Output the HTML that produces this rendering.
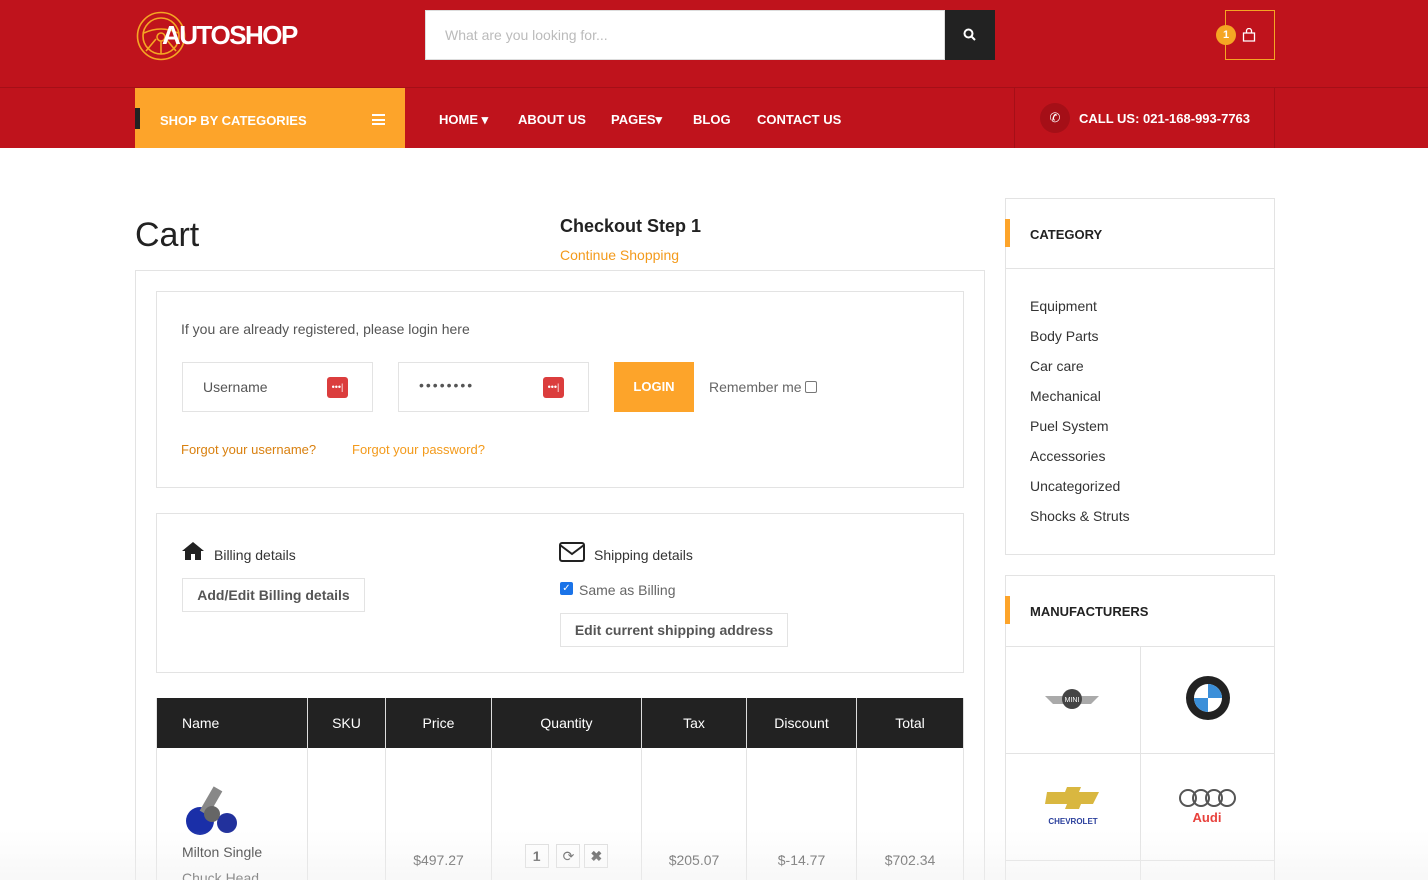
<!DOCTYPE html>
<html><head><meta charset="utf-8"><style>
*{box-sizing:border-box;margin:0;padding:0}
html,body{width:1428px;height:880px;overflow:hidden}
body{background:#fff;font-family:"Liberation Sans",sans-serif;color:#333;position:relative}
.a{position:absolute}
.hdr{left:0;top:0;width:1428px;height:148px;background:#bf131c}
.navline{left:0;top:87px;width:1428px;height:1px;background:#a50f17}
.nav{color:#fff;font-weight:bold;font-size:13px;top:112px}
.box{border:1px solid #e3e3e3;background:#fff}
.inp{border:1px solid #e3e3e3;height:50px;width:191px;top:362px}
.key{width:21px;height:21px;background:#db3d3d;border-radius:3px;color:#fff;font-size:9px;text-align:center;line-height:20px;top:14px;right:24px;position:absolute}
.or{color:#f39a1b}
th{background:#222;color:#fff;font-weight:normal;font-size:14px;height:50px;border-right:1px solid #ddd}
td{border-right:1px solid #e3e3e3;border-bottom:1px solid #e3e3e3;vertical-align:bottom;text-align:center;font-size:14px;color:#555;padding-bottom:20px}
table{border-collapse:collapse;border-left:1px solid #e3e3e3}
.cat{left:1030px;font-size:14px;color:#333}
</style></head><body>
<div class="a hdr"></div><div class="a navline"></div>
<svg class="a" style="left:136px;top:11px" width="50" height="50" viewBox="0 0 50 50" fill="none" stroke="#f5a623" stroke-width="1.6"><circle cx="25" cy="25" r="23.5"/><circle cx="25" cy="25" r="18"/><path d="M8 22 q17 -8 34 0 M25 30 v13 M20 28 l-10 12 M30 28 l10 12"/><circle cx="25" cy="26" r="4"/></svg>
<div class="a" style="left:162px;top:20px;color:#fff;font-weight:bold;font-size:26px;letter-spacing:-1.5px">AUTOSHOP</div>
<div class="a" style="left:425px;top:10px;width:520px;height:50px;background:#fff;border:1px solid #ddd;padding:16px 19px;font-size:14px;color:#bbb">What are you looking for...</div>
<div class="a" style="left:945px;top:10px;width:50px;height:50px;background:#222"><svg style="margin:18px" width="13" height="13" viewBox="0 0 13 13" fill="none" stroke="#fff" stroke-width="2"><circle cx="5.5" cy="5.5" r="4"/><path d="M8.5 8.5l3.5 3.5"/></svg></div>
<div class="a" style="left:1225px;top:10px;width:50px;height:50px;border:1px solid #f5a623"></div>
<div class="a" style="left:1216px;top:25px;width:20px;height:20px;border-radius:50%;background:#f5a623;color:#fff;font-size:11px;font-weight:bold;text-align:center;line-height:20px">1</div>
<svg class="a" style="left:1242px;top:28px" width="14" height="14" viewBox="0 0 14 14" fill="none" stroke="#fff" stroke-width="1.3"><path d="M1.5 5h11v8h-11z M4.5 5V3a2.5 2.5 0 0 1 5 0v2"/></svg>
<div class="a" style="left:135px;top:88px;width:270px;height:60px;background:#fda42a"></div>
<div class="a" style="left:135px;top:108px;width:5px;height:21px;background:#222"></div>
<div class="a" style="left:160px;top:113px;color:#fff;font-weight:bold;font-size:13px">SHOP BY CATEGORIES</div>
<div class="a" style="left:372px;top:114px;width:13px;height:11px;border-top:2px solid #fff;border-bottom:2px solid #fff"><div style="margin-top:2.5px;height:2px;background:#fff"></div></div>
<div class="a nav" style="left:439px">HOME ▾</div>
<div class="a nav" style="left:518px">ABOUT US</div>
<div class="a nav" style="left:611px">PAGES▾</div>
<div class="a nav" style="left:693px">BLOG</div>
<div class="a nav" style="left:757px">CONTACT US</div>
<div class="a" style="left:1014px;top:88px;width:1px;height:60px;background:#a50f17"></div>
<div class="a" style="left:1274px;top:88px;width:1px;height:60px;background:#a50f17"></div>
<div class="a" style="left:1040px;top:103px;width:30px;height:30px;border-radius:50%;background:#a50f17;color:#fff;text-align:center;line-height:30px;font-size:13px">✆</div>
<div class="a" style="left:1079px;top:111px;color:#fff;font-weight:bold;font-size:13px">CALL US: 021-168-993-7763</div>

<div class="a" style="left:135px;top:216px;font-size:34px;color:#222">Cart</div>
<div class="a" style="left:560px;top:216px;font-size:18px;font-weight:bold;color:#222">Checkout Step 1</div>
<div class="a or" style="left:560px;top:247px;font-size:14px">Continue Shopping</div>
<div class="a box" style="left:135px;top:270px;width:850px;height:620px"></div>
<div class="a box" style="left:156px;top:291px;width:808px;height:197px"></div>
<div class="a" style="left:181px;top:321px;font-size:14px;color:#555">If you are already registered, please login here</div>
<div class="a inp" style="left:182px"><span style="position:absolute;left:20px;top:16px;font-size:14px;color:#555">Username</span><div class="key">•••|</div></div>
<div class="a inp" style="left:398px"><span style="position:absolute;left:20px;top:14px;font-size:14px;color:#555;letter-spacing:2px">••••••••</span><div class="key">•••|</div></div>
<div class="a" style="left:614px;top:362px;width:80px;height:50px;background:#fda42a;color:#fff;font-weight:bold;font-size:13px;text-align:center;line-height:50px">LOGIN</div>
<div class="a" style="left:709px;top:379px;font-size:14px;color:#666">Remember me <span style="display:inline-block;width:12px;height:12px;border:1px solid #777;border-radius:2px;vertical-align:-1px"></span></div>
<div class="a" style="left:181px;top:442px;font-size:13px;color:#d9800f">Forgot your username?</div>
<div class="a or" style="left:352px;top:442px;font-size:13px">Forgot your password?</div>

<div class="a box" style="left:156px;top:513px;width:808px;height:160px"></div>
<svg class="a" style="left:181px;top:541px" width="24" height="20" viewBox="0 0 24 20"><path d="M12 1L1 10h3v9h6v-6h4v6h6v-9h3z" fill="#222"/></svg>
<div class="a" style="left:214px;top:547px;font-size:14px;color:#333">Billing details</div>
<div class="a box" style="left:182px;top:578px;width:183px;height:34px;font-size:14px;font-weight:bold;color:#555;text-align:center;line-height:32px">Add/Edit Billing details</div>
<svg class="a" style="left:559px;top:542px" width="26" height="20" viewBox="0 0 26 20" fill="none" stroke="#222" stroke-width="2"><rect x="1" y="1" width="24" height="18" rx="2"/><path d="M1 3l12 9 12-9"/></svg>
<div class="a" style="left:594px;top:547px;font-size:14px;color:#333">Shipping details</div>
<div class="a" style="left:560px;top:582px;width:13px;height:13px;background:#1a73e8;border-radius:2px;color:#fff;font-size:10px;text-align:center;line-height:13px">✓</div>
<div class="a" style="left:579px;top:582px;font-size:14px;color:#666">Same as Billing</div>
<div class="a box" style="left:560px;top:613px;width:228px;height:34px;font-size:14px;font-weight:bold;color:#555;text-align:center;line-height:32px">Edit current shipping address</div>

<table class="a" style="left:156px;top:698px;width:808px">
<tr><th style="width:151px;text-align:left;padding-left:25px">Name</th><th style="width:78px">SKU</th><th style="width:106px">Price</th><th style="width:150px">Quantity</th><th style="width:105px">Tax</th><th style="width:110px">Discount</th><th>Total</th></tr>
<tr style="height:140px"><td style="text-align:left;padding-left:25px;color:#333;padding-bottom:0">
<svg width="60" height="60" viewBox="0 0 60 60"><circle cx="18" cy="40" r="14" fill="#1a2fa8"/><circle cx="45" cy="42" r="10" fill="#22319c"/><rect x="24" y="6" width="10" height="28" fill="#888" transform="rotate(30 29 20)"/><circle cx="30" cy="33" r="8" fill="#666"/></svg><div style="height:26px;padding-top:0">Milton Single</div><div style="height:18px;overflow:hidden">Chuck Head</div></td>
<td></td><td>$497.27</td><td><span style="display:inline-block;border:1px solid #ddd;width:24px;height:24px;line-height:22px;font-weight:bold">1</span> &nbsp;<span style="display:inline-block;border:1px solid #ddd;width:24px;height:24px;line-height:22px">⟳</span> <span style="display:inline-block;border:1px solid #ddd;width:24px;height:24px;line-height:22px;font-weight:bold">✖</span></td><td>$205.07</td><td>$-14.77</td><td>$702.34</td></tr></table>

<div class="a box" style="left:1005px;top:198px;width:270px;height:357px"></div>
<div class="a" style="left:1005px;top:268px;width:270px;height:1px;background:#e3e3e3"></div>
<div class="a" style="left:1005px;top:219px;width:5px;height:28px;background:#fda42a"></div>
<div class="a" style="left:1030px;top:227px;font-size:13px;font-weight:bold;color:#222">CATEGORY</div>
<div class="a cat or" style="top:298px">Equipment</div>
<div class="a cat" style="top:328px">Body Parts</div>
<div class="a cat" style="top:358px">Car care</div>
<div class="a cat" style="top:388px">Mechanical</div>
<div class="a cat" style="top:418px">Puel System</div>
<div class="a cat" style="top:448px">Accessories</div>
<div class="a cat" style="top:478px">Uncategorized</div>
<div class="a cat" style="top:508px">Shocks &amp; Struts</div>

<div class="a box" style="left:1005px;top:575px;width:270px;height:320px"></div>
<div class="a" style="left:1005px;top:596px;width:5px;height:28px;background:#fda42a"></div>
<div class="a" style="left:1030px;top:604px;font-size:13px;font-weight:bold;color:#222">MANUFACTURERS</div>
<div class="a" style="left:1005px;top:646px;width:270px;height:1px;background:#e3e3e3"></div>
<div class="a" style="left:1005px;top:753px;width:270px;height:1px;background:#e3e3e3"></div>
<div class="a" style="left:1005px;top:860px;width:270px;height:1px;background:#e3e3e3"></div>
<div class="a" style="left:1140px;top:646px;width:1px;height:240px;background:#e3e3e3"></div>
<svg class="a" style="left:1043px;top:686px" width="58" height="26" viewBox="0 0 58 26"><path d="M2 10h54l-8 8H10z" fill="#aaa"/><circle cx="29" cy="13" r="10" fill="#444"/><text x="29" y="16" font-size="7" fill="#fff" text-anchor="middle" font-family="Liberation Sans">MINI</text></svg>
<svg class="a" style="left:1185px;top:675px" width="46" height="46" viewBox="0 0 46 46"><circle cx="23" cy="23" r="22" fill="#222"/><circle cx="23" cy="23" r="14" fill="#fff"/><path d="M23 9a14 14 0 0 1 14 14H23zM23 37a14 14 0 0 1-14-14h14z" fill="#3b8fd9"/></svg>
<svg class="a" style="left:1043px;top:786px" width="60" height="42" viewBox="0 0 60 42"><path d="M4 6h18l2-5h14l-2 5h20l-6 12H38l-2 5H22l2-5H2z" fill="#d9b740"/><text x="30" y="38" font-size="8" font-weight="bold" fill="#2a3f9c" text-anchor="middle" font-family="Liberation Sans">CHEVROLET</text></svg>
<svg class="a" style="left:1178px;top:786px" width="60" height="40" viewBox="0 0 60 40" fill="none" stroke="#555" stroke-width="2"><circle cx="10" cy="12" r="8"/><circle cx="23" cy="12" r="8"/><circle cx="36" cy="12" r="8"/><circle cx="49" cy="12" r="8"/><text x="29" y="36" font-size="13" font-weight="bold" fill="#e8413c" stroke="none" text-anchor="middle" font-family="Liberation Sans">Audi</text></svg>
<div class="a" style="left:0;top:830px;width:1428px;height:50px;background:linear-gradient(rgba(255,255,255,0),rgba(240,240,240,0.5))"></div>
</body></html>
